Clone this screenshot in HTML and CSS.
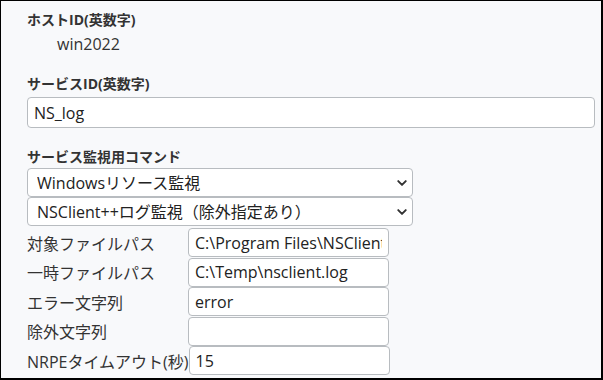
FILE: index.html
```html
<!DOCTYPE html>
<html lang="ja">
<head>
    <meta charset="UTF-8">
    <title>サービス設定</title>
    <meta name="viewport" content="width=device-width, initial-scale=1.0">
    <link rel="stylesheet" href="styles.css">
</head>
<body>
    <div class="panel">
        <div class="field-label">ホストID(英数字)</div>
        <div class="field-value">win2022</div>

        <div class="field-label gap-top">サービスID(英数字)</div>
        <input class="text-input wide" type="text" value="NS_log">

        <div class="field-label gap-top">サービス監視用コマンド</div>
        <select class="select-input first">
            <option>Windowsリソース監視</option>
        </select>
        <select class="select-input">
            <option>NSClient++ログ監視（除外指定あり）</option>
        </select>

        <div class="param-list">
            <div class="param-row">
                <span class="param-name">対象ファイルパス</span>
                <input class="text-input param" type="text" value="C:\Program Files\NSClient++\log\nsclient.log">
            </div>
            <div class="param-row">
                <span class="param-name">一時ファイルパス</span>
                <input class="text-input param" type="text" value="C:\Temp\nsclient.log">
            </div>
            <div class="param-row">
                <span class="param-name">エラー文字列</span>
                <input class="text-input param" type="text" value="error">
            </div>
            <div class="param-row">
                <span class="param-name">除外文字列</span>
                <input class="text-input param" type="text" value="">
            </div>
            <div class="param-row">
                <span class="param-name">NRPEタイムアウト(秒)</span>
                <input class="text-input param" type="text" value="15">
            </div>
        </div>
    </div>
</body>
</html>
```

FILE: styles.css
```css
html, body {
    margin: 0;
    padding: 0;
    height: 100%;
}
body {
    font-family: "Open Sans", "Noto Sans CJK JP", sans-serif;
    color: #333;
    background: #000;
}
.panel {
    box-sizing: border-box;
    height: 380px;
    width: 603px;
    border-style: solid;
    border-color: #000;
    border-width: 1px 2px 2px 1px;
    background: #f8f9fb;
    padding: 9px 0 0 26px;
    overflow: hidden;
}
.field-label {
    font-size: 14px;
    font-weight: bold;
    line-height: 20px;
    color: #333;
}
.field-label.gap-top {
    margin-top: 19px;
}
.field-value {
    font-size: 16px;
    line-height: 22px;
    margin: 3px 0 0 30px;
    color: #333;
}
.text-input {
    box-sizing: border-box;
    display: block;
    font-family: "Open Sans", "Noto Sans CJK JP", sans-serif;
    font-size: 16px;
    color: #222;
    background: #fff;
    border: 1px solid #b8bcc0;
    border-radius: 4px;
    padding: 0 6px;
    margin: 0;
    outline: none;
}
.text-input.wide {
    width: 568px;
    height: 31px;
    margin-top: 3px;
}
.select-input {
    box-sizing: border-box;
    display: block;
    width: 386px;
    height: 29px;
    margin: 0;
    padding: 0 24px 0 9px;
    font-family: "Open Sans", "Noto Sans CJK JP", sans-serif;
    font-size: 16px;
    color: #222;
    border: 1px solid #b8bcc0;
    border-radius: 4px;
    -webkit-appearance: none;
    appearance: none;
    background: #fff url("data:image/svg+xml,%3csvg xmlns='http://www.w3.org/2000/svg' viewBox='0 0 16 16'%3e%3cpath fill='none' stroke='%23333' stroke-linecap='round' stroke-linejoin='round' stroke-width='2.6' d='M3 5.5l5 5 5-5'/%3e%3c/svg%3e") no-repeat right 4px center / 12px 12px;
}
.select-input.first {
    margin-top: 1px;
}
.param-list {
    margin-top: 2px;
}
.param-row {
    display: flex;
    align-items: center;
    height: 29.5px;
}
.param-name {
    flex: 0 0 161px;
    font-size: 16px;
    white-space: nowrap;
    color: #333;
}
.text-input.param {
    width: 201px;
    height: 29px;
}
```
